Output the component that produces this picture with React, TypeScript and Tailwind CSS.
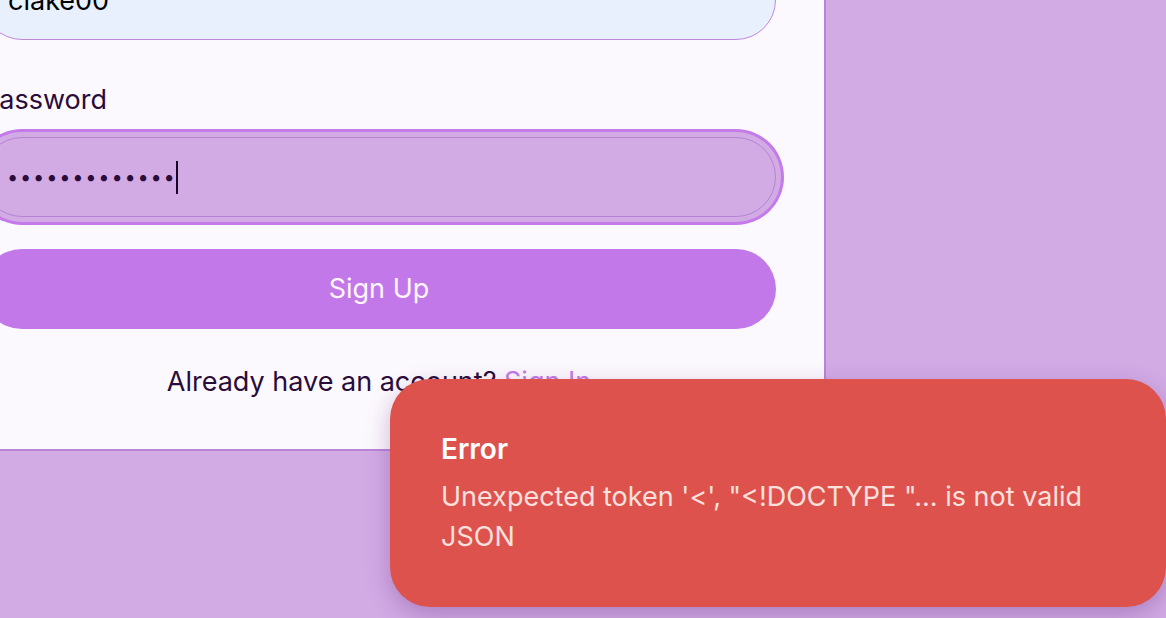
import React from 'react';

const App: React.FC = () => {
  return (
    <div className="relative h-[618px] w-[1166px] overflow-hidden bg-[#d2abe5] font-['Inter',sans-serif] text-[#2a0c3a]">
      <div className="-ml-[68px] -mt-[147px] w-[894px] rounded-[28px] border-2 border-[#b985d8] bg-[#fcf9fe] px-[48px] pt-[48px] pb-[47px]">
        <form className="flex flex-col">
          <label className="mb-[17px] block h-[40px] text-[27px] leading-[40px]">Username</label>
          <input
            type="text"
            defaultValue="clake00"
            className="h-[80px] w-full rounded-full border border-[#bf88d9] bg-[#e8f0fe] px-[25px] text-[27px] text-black outline-none"
          />

          <label className="mt-[40px] mb-[17px] block h-[40px] text-[27px] leading-[40px]">Password</label>
          <div className="flex h-[80px] w-full items-center rounded-full border border-[#b583d4] bg-[#d2abe5] px-[24px] ring-[3px] ring-[#c47ae9] ring-offset-[5px] ring-offset-[#d2abe5]">
            <span className="text-[20px] leading-none tracking-[1.8px] text-[#2a0c3a]">•••••••••••••</span>
            <span className="-ml-[1px] h-[33px] w-[2px] bg-[#1a0626]" />
          </div>

          <button
            type="submit"
            className="mt-[32px] h-[80px] w-full rounded-full bg-[#c278e9] text-[27px] text-[#fdf5ff]"
          >
            Sign Up
          </button>

          <p className="mt-[33px] h-[40px] text-center text-[27px] leading-[40px]">
            Already have an account? <span className="text-[#c47ae9]">Sign In</span>
          </p>
        </form>
      </div>

      <div className="absolute left-[390px] top-[379px] h-[228px] w-[776px] rounded-[40px] bg-[#dd524c] px-[51px] pt-[52px] shadow-[0_8px_24px_rgba(90,30,110,0.3)]">
        <div className="text-[28px] font-semibold leading-[36px] text-white">Error</div>
        <div className="mt-[10px] text-[27px] leading-[40px] text-[#fbe0de]">
          Unexpected token '&lt;', "&lt;!DOCTYPE "... is not valid JSON
        </div>
      </div>
    </div>
  );
};

export default App;
